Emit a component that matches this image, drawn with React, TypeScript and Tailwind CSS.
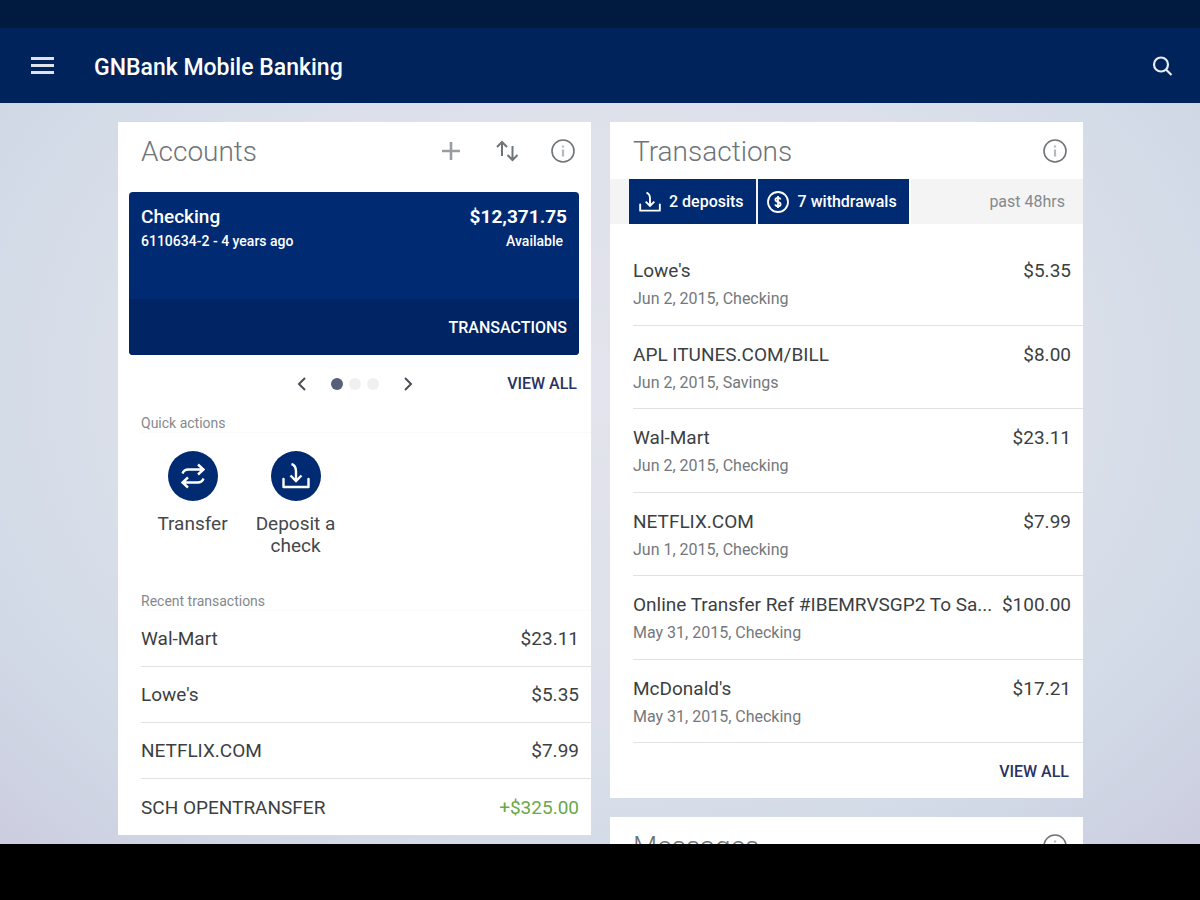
import { type ReactNode } from "react";

type Transaction = {
  name: string;
  amount: string;
  detail?: string;
  credit?: boolean;
};

const recent: Transaction[] = [
  { name: "Wal-Mart", amount: "$23.11" },
  { name: "Lowe's", amount: "$5.35" },
  { name: "NETFLIX.COM", amount: "$7.99" },
  { name: "SCH OPENTRANSFER", amount: "+$325.00", credit: true },
];

const transactions: Transaction[] = [
  { name: "Lowe's", amount: "$5.35", detail: "Jun 2, 2015, Checking" },
  { name: "APL ITUNES.COM/BILL", amount: "$8.00", detail: "Jun 2, 2015, Savings" },
  { name: "Wal-Mart", amount: "$23.11", detail: "Jun 2, 2015, Checking" },
  { name: "NETFLIX.COM", amount: "$7.99", detail: "Jun 1, 2015, Checking" },
  {
    name: "Online Transfer Ref #IBEMRVSGP2 To Sa...",
    amount: "$100.00",
    detail: "May 31, 2015, Checking",
  },
  { name: "McDonald's", amount: "$17.21", detail: "May 31, 2015, Checking" },
];

const InfoIcon = () => (
  <svg viewBox="0 0 24 24" className="size-6" fill="none" stroke="currentColor" strokeWidth="1.6">
    <circle cx="12" cy="12" r="11" />
    <path d="M12 6.600v2M12 10.400v7" strokeWidth="2.200" opacity="0.5" />
  </svg>
);

const DepositIcon = ({ className }: { className: string }) => (
  <svg viewBox="0 0 28 28" className={className} fill="none" stroke="currentColor" strokeWidth="2.400">
    <path d="M1.500 17v8h25v-8" strokeLinejoin="round" strokeLinecap="round" />
    <path d="M9.500 2c3 1 4.500 3.500 4.500 7.500V18" />
    <path d="M8.500 13.500l5.500 5.500 5.500-5.500" />
  </svg>
);

const TransferIcon = () => (
  <svg viewBox="0 0 24 28" className="h-7 w-6" fill="none" stroke="currentColor" strokeWidth="2.400">
    <path d="M1.500 11.500c1-3 3-4 6-4H22M17 2.500l5.500 5-5.500 5" />
    <path d="M22.500 16.500c-1 3-3 4-6 4H2M7 15.500l-5.500 5 5.500 5" />
  </svg>
);

const DollarIcon = () => (
  <svg viewBox="0 0 24 24" className="size-6" fill="none" stroke="currentColor" strokeWidth="1.800">
    <circle cx="12" cy="12" r="10" />
    <path d="M14.600 9.600c-.3-1-1.300-1.700-2.600-1.700s-2.600.7-2.600 1.900c0 2.800 5.200 1.400 5.200 4.400 0 1.200-1.100 2-2.600 2s-2.500-.8-2.700-1.900M12 6v12" />
  </svg>
);

const Chevron = ({ d }: { d: string }) => (
  <svg viewBox="0 0 12 14" className="h-3.5 w-3" fill="none" stroke="currentColor" strokeWidth="2">
    <path d={d} />
  </svg>
);

const CardHeader = ({ title, children }: { title: string; children: ReactNode }) => (
  <div className="flex h-[57px] items-center justify-between pr-4 pl-[23px]">
    <h2 className="pt-0.5 text-[28px] leading-9 font-light text-[#6f7479]">{title}</h2>
    <div className="flex items-center gap-8 text-[#6f7479]">{children}</div>
  </div>
);

const QuickAction = ({ label, icon }: { label: string; icon: ReactNode }) => (
  <button className="flex w-[103px] flex-col items-center gap-3">
    <span className="flex size-[50px] items-center justify-center rounded-full bg-[#002a72] text-white">
      {icon}
    </span>
    <span className="w-[82px] text-[19px] leading-[22px] text-[#45484b]">{label}</span>
  </button>
);

const SectionLabel = ({ children }: { children: ReactNode }) => (
  <h3 className="ml-[23px] h-5 border-b border-[#fafafa] text-sm leading-5 text-[#85898d]">
    {children}
  </h3>
);

const AccountsCard = () => (
  <section className="bg-white">
    <CardHeader title="Accounts">
      <button aria-label="Add account">
        <svg viewBox="0 0 24 24" className="size-6" stroke="currentColor" strokeWidth="2.600" opacity="0.7">
          <path d="M12 3v18M3 12h18" />
        </svg>
      </button>
      <button aria-label="Sort accounts">
        <svg viewBox="0 0 24 24" className="size-6" fill="none" stroke="currentColor" strokeWidth="2">
          <path d="M2 8l5-5 5 5M7 3v14" />
          <path d="M12.500 16l5 5 5-5M17.500 7v14" />
        </svg>
      </button>
      <button aria-label="About accounts">
        <InfoIcon />
      </button>
    </CardHeader>

    <div className="mt-[13px] mr-3 ml-[11px] overflow-hidden rounded bg-[#002a72] text-white">
      <div className="flex h-[107px] justify-between px-3 pt-3">
        <div>
          <p className="text-[19px] leading-[26px] font-medium">Checking</p>
          <p className="text-sm leading-[22px] font-medium">6110634-2 - 4 years ago</p>
        </div>
        <div className="text-right">
          <p className="text-[19px] leading-[26px] font-bold">$12,371.75</p>
          <p className="pr-1 text-sm leading-[22px] font-medium">Available</p>
        </div>
      </div>
      <div className="flex h-14 items-center justify-end bg-[#002464] px-3 pt-0.5">
        <a href="#transactions" className="text-base font-medium">
          TRANSACTIONS
        </a>
      </div>
    </div>

    <div className="grid h-[58px] grid-cols-[1fr_auto_1fr] items-center pr-3.5 pl-[15px]">
      <span />
      <div className="flex items-center text-[#4a4f57]">
        <button aria-label="Previous account">
          <Chevron d="M9 1L3 7l6 6" />
        </button>
        <span className="mx-[23px] flex gap-1.5">
          <span className="size-3 rounded-full bg-[#566078]" />
          <span className="size-3 rounded-full bg-[#f0f0f2]" />
          <span className="size-3 rounded-full bg-[#f0f0f2]" />
        </span>
        <button aria-label="Next account">
          <Chevron d="M3 1l6 6-6 6" />
        </button>
      </div>
      <a href="#accounts" className="justify-self-end text-base font-medium text-[#2b3363]">
        VIEW ALL
      </a>
    </div>

    <SectionLabel>Quick actions</SectionLabel>
    <div className="flex h-[158px] items-start pt-[18px] pl-[23px]">
      <QuickAction label="Transfer" icon={<TransferIcon />} />
      <QuickAction label="Deposit a check" icon={<DepositIcon className="size-7" />} />
    </div>

    <SectionLabel>Recent transactions</SectionLabel>
    <ul className="ml-[23px] divide-y divide-[#e2e2e2]">
      {recent.map((item) => (
        <li
          key={item.name}
          className="flex h-14 items-center justify-between pt-0.5 pr-3 text-[19px] text-[#3c3f42]"
        >
          <span>{item.name}</span>
          <span className={item.credit ? "text-[#6aa84a]" : ""}>{item.amount}</span>
        </li>
      ))}
    </ul>
  </section>
);

const TransactionsCard = () => (
  <section className="bg-white">
    <CardHeader title="Transactions">
      <button aria-label="About transactions">
        <InfoIcon />
      </button>
    </CardHeader>

    <div className="flex h-[45px] items-stretch bg-[#f4f4f4] pr-[18px] pl-[19px]">
      <div className="flex gap-0.5 border-r-2 border-white text-base font-medium text-white">
        <button className="flex items-center gap-2 bg-[#002a72] pr-3 pl-2.5">
          <DepositIcon className="size-[22px]" />2 deposits
        </button>
        <button className="flex items-center gap-2 bg-[#002a72] pr-3 pl-2">
          <DollarIcon />7 withdrawals
        </button>
      </div>
      <span className="ml-auto self-center text-base text-[#85898d]">past 48hrs</span>
    </div>

    <ul className="mt-[18px] ml-[23px] grid h-[501px] auto-rows-fr grid-cols-1">
      {transactions.map((item) => (
        <li key={item.name} className="min-w-0 border-b border-[#e2e2e2] pt-[15px] pr-3">
          <div className="flex justify-between gap-1 text-[19px] leading-7 text-[#3c3f42]">
            <span className="truncate">{item.name}</span>
            <span>{item.amount}</span>
          </div>
          <p className="text-base leading-7 text-[#74787c]">{item.detail}</p>
        </li>
      ))}
    </ul>

    <div className="flex h-[55px] items-center justify-end pt-0.5 pr-3.5">
      <a href="#transactions" className="text-base font-medium text-[#2b3363]">
        VIEW ALL
      </a>
    </div>
  </section>
);

const App = () => {
  return (
    <div className="flex h-screen flex-col bg-black font-['Roboto',sans-serif]">
      {/* Status bar */}
      <div className="h-7 shrink-0 bg-[#001a40]" />

      <header className="flex h-[75px] shrink-0 items-center bg-[#00235b] pr-[25px] pl-[31px] text-white">
        <button aria-label="Open menu" className="flex w-[23px] flex-col gap-1">
          <span className="h-[3px] bg-[#dfe3ee]" />
          <span className="h-[3px] bg-[#dfe3ee]" />
          <span className="h-[3px] bg-[#dfe3ee]" />
        </button>
        <h1 className="ml-10 pt-1 text-[23px] leading-8 font-medium">GNBank Mobile Banking</h1>
        <button aria-label="Search" className="ml-auto">
          <svg viewBox="0 0 24 24" className="size-6" fill="none" stroke="#e8eaf4" strokeWidth="2.200">
            <circle cx="10" cy="10.500" r="7" />
            <path d="M15 15.500l5.500 5.500" />
          </svg>
        </button>
      </header>

      <main className="grid min-h-0 flex-1 grid-cols-2 items-start gap-[19px] overflow-hidden bg-[radial-gradient(ellipse_at_50%_38%,#e3e4ec_0%,#dde0ea_50%,#d2dbe7_75%,#cccde0_100%)] pt-[19px] pr-[117px] pl-[118px]">
        <AccountsCard />
        <div className="flex min-w-0 flex-col gap-[19px]">
          <TransactionsCard />
          <section className="bg-white pb-24">
            <CardHeader title="Messages">
              <button aria-label="About messages">
                <InfoIcon />
              </button>
            </CardHeader>
          </section>
        </div>
      </main>

      {/* System navigation bar */}
      <div className="h-14 shrink-0 bg-black" />
    </div>
  );
};

export default App;
